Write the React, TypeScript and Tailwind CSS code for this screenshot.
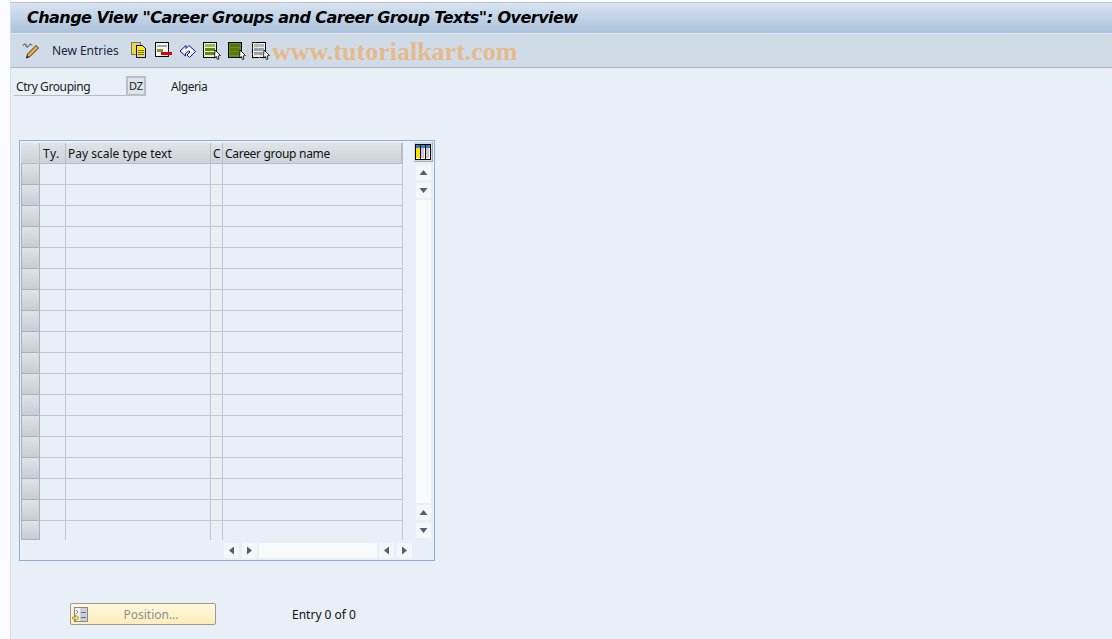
const font = { fontFamily: '"Noto Sans", sans-serif' };

const rowCount = 18;

function SheetIcon({ fill, band, top }: { fill: string; band: string; top: string }) {
  return (
    <svg width="18" height="18" viewBox="0 0 18 18" shapeRendering="crispEdges">
      <rect x="0.5" y="0.5" width="13" height="15" fill={fill} stroke="#000" strokeWidth="1.4" />
      <rect x="2" y="2" width="10" height="3" fill={top} />
      <rect x="2" y="6" width="10" height="3" fill={band} />
      <rect x="2" y="10" width="10" height="3" fill={band} />
      <path d="M12 8l5.5 5.5-2.5.5 1 3-1.5.5-1.2-3-1.8 1.5z" fill="#fff" stroke="#000" strokeWidth="0.8" shapeRendering="auto" />
    </svg>
  );
}

function ToolIcons() {
  return (
    <div className="flex items-center">
      {/* copy */}
      <svg className="ml-[12px]" width="17" height="17" viewBox="0 0 17 17" shapeRendering="crispEdges">
        <rect x="0.5" y="0.5" width="9" height="12" fill="#e8d84a" stroke="#77775a" />
        <path d="M5.5 3.5h6l3 3v9h-9z" fill="#ffe900" stroke="#0000c8" />
        <path d="M7 8h6M7 10h6M7 12h6" stroke="#6a6a20" />
      </svg>
      {/* delete */}
      <svg className="ml-[7px]" width="18" height="17" viewBox="0 0 18 17" shapeRendering="crispEdges">
        <rect x="0.5" y="0.5" width="13" height="14" fill="#f4f6f8" stroke="#000" />
        <rect x="2" y="3" width="10" height="2" fill="#9aa8b4" />
        <rect x="2" y="7" width="6" height="3" fill="#7f9a20" />
        <rect x="6" y="10" width="11" height="3" fill="#e00010" />
      </svg>
      {/* undo */}
      <svg className="ml-[6px]" width="18" height="17" viewBox="0 0 18 17">
        <path d="M1 9l6-5.500v3l3-3 6.500 6-6 6-2.500-2.500 3-3-1.200-1.200L6.500 11.500v2.500z" fill="#f2f6fb" stroke="#10108c" strokeWidth="1" />
      </svg>
      <div className="ml-[6px] flex">
        <SheetIcon fill="#eaf0da" band="#5f8a10" top="#9ab84a" />
      </div>
      <div className="ml-[7px] flex">
        <SheetIcon fill="#6f8f18" band="#55780f" top="#4e7410" />
      </div>
      <div className="ml-[6px] flex">
        <SheetIcon fill="#eef2f6" band="#8ea0b0" top="#a8b8c4" />
      </div>
    </div>
  );
}

function ArrowButton({ dir }: { dir: "up" | "down" | "left" | "right" }) {
  const points = {
    up: "3.5,10 7.5,5 11.5,10",
    down: "3.5,5 11.5,5 7.5,10",
    left: "10,3.5 10,11.5 5,7.5",
    right: "5,3.5 5,11.5 10,7.5",
  }[dir];
  return (
    <div className="w-[15px] h-[15px] bg-[#f4f7fa] flex items-center justify-center">
      <svg width="15" height="15" viewBox="0 0 15 15">
        <polygon points={points} fill="#4f6070" />
      </svg>
    </div>
  );
}

function TableGrid() {
  const rows = Array.from({ length: rowCount });
  const head = "bg-gradient-to-b from-[#e0e4e8] to-[#cdd2d8] border-b border-[#b4bdc8] overflow-hidden";
  return (
    <div className="w-[382px]">
      {/* header */}
      <div className="flex h-[21px] text-[12px] text-[#111] leading-[21px]">
        <div className={`w-[19px] shrink-0 border-r ${head}`} />
        <div className={`w-[26px] shrink-0 pl-[3px] tracking-[0.5px] border-r ${head}`}>Ty.</div>
        <div className={`w-[145px] shrink-0 pl-[2px] border-r ${head}`}>Pay scale type text</div>
        <div className={`w-[12px] shrink-0 pl-[2px] border-r ${head}`}>C</div>
        <div className={`flex-1 pl-[2px] tracking-[-0.3px] border-r-2 ${head}`}>Career group name</div>
      </div>
      {/* body */}
      {rows.map((_, i) => {
        const last = i === rowCount - 1;
        const cell = `border-r border-[#bcc8d6] ${last ? "" : "border-b"}`;
        return (
          <div key={i} className={`flex ${last ? "h-[19px]" : "h-[21px]"}`}>
            <div className="w-[19px] shrink-0 bg-gradient-to-b from-[#dfe3e7] to-[#c8cdd4] border border-t-0 border-[#a9b1ba]" />
            <div className={`w-[26px] shrink-0 ${cell}`} />
            <div className={`w-[145px] shrink-0 ${cell}`} />
            <div className={`w-[12px] shrink-0 ${cell}`} />
            <div className={`flex-1 ${cell}`} />
          </div>
        );
      })}
    </div>
  );
}

function ColumnConfigIcon() {
  return (
    <div className="w-[19px] h-[20px] bg-[#d5dae0] border-r border-b border-[#a8b0b8] flex items-center justify-center">
      <svg width="16" height="16" viewBox="0 0 16 16" shapeRendering="crispEdges">
        <rect x="0.5" y="0.5" width="15" height="15" fill="#fff" stroke="#000" />
        <rect x="1" y="1" width="14" height="3" fill="#2f7fc4" />
        <rect x="1" y="4" width="4" height="10" fill="#ffe000" />
        <rect x="6" y="4" width="3" height="10" fill="#c8c8c8" />
        <rect x="11" y="4" width="3" height="10" fill="#c8c8c8" />
        <path d="M5.5 1v14M10.5 1v14" stroke="#000" />
      </svg>
    </div>
  );
}

export default function App() {
  return (
    <div className="relative h-[639px] w-[1112px] overflow-hidden bg-[#fbfcfd] flex text-[12px]" style={font}>
      <div className="w-[10px] shrink-0" />
      <div className="flex-1 flex flex-col border-l border-[#d6dde8] bg-[#e8eff6]">
        <div className="h-[3px] shrink-0 bg-[#fbfcfd] border-b border-[#b9c2cc]" />
        <div className="h-[31px] shrink-0 pl-[16px] flex items-center bg-gradient-to-b from-[#d8e4f0] to-[#a9c1da] border-b border-[#e2e9f0]">
          <h1 className="text-[16px] tracking-[-0.54px] font-bold italic text-black whitespace-nowrap" style={{ fontFamily: '"DejaVu Sans", sans-serif' }}>
            Change View "Career Groups and Career Group Texts": Overview
          </h1>
        </div>
        <div className="h-[34px] shrink-0 pl-[11px] flex items-center bg-[#cfdce7] border-b border-[#aab4bf]">
          <svg width="19" height="18" viewBox="0 0 19 18">
            <path d="M4.500 16l1-4 8.500-8.500 2.500 2.500-8.500 8.500z" fill="#f4a93a" stroke="#222" strokeWidth="0.9" />
            <path d="M4.500 16l.6-2.500 1.900 1.900z" fill="#222" />
            <path d="M1 3.500c1-2 3-2 3 0s2 2 3 0 2-1.500 3 0" fill="none" stroke="#222" strokeWidth="1" />
          </svg>
          <span className="ml-[11px] tracking-[-0.05px] text-[#1a2440] whitespace-nowrap">New Entries</span>
          <ToolIcons />
        </div>

        <div className="mt-[8px] ml-[3px] flex h-[20px] items-stretch">
          <div className="w-[112px] border-b border-[#b4bcc6] pl-[2px] tracking-[-0.4px] leading-[21px] text-[#1c1c1c]">Ctry Grouping</div>
          <div className="w-[20px] bg-[#dee3e9] border-2 border-[#b8bfc7] text-[11px] leading-[16px] text-center text-[#222]">DZ</div>
          <div className="ml-[25px] tracking-[-0.5px] leading-[21px] text-[#1c1c1c]">Algeria</div>
        </div>

        <div className="mt-[44px] ml-[8px] w-[416px] h-[421px] border border-[#8fb0cf] pt-[2px] pl-[1px] flex">
          <div className="flex flex-col w-[382px]">
            <TableGrid />
            <div className="mt-[3px] ml-[203px] flex">
              <ArrowButton dir="left" />
              <div className="ml-[3px]"><ArrowButton dir="right" /></div>
              <div className="ml-[2px] w-[118px] h-[15px] shrink-0 bg-[#f8fafb]" />
              <div className="ml-[2px]"><ArrowButton dir="left" /></div>
              <div className="ml-[3px]"><ArrowButton dir="right" /></div>
            </div>
          </div>
          <div className="ml-[11px] -mt-[1px] flex flex-col items-center">
            <ColumnConfigIcon />
            <div className="mt-[3px]"><ArrowButton dir="up" /></div>
            <div className="mt-[3px]"><ArrowButton dir="down" /></div>
            <div className="mt-[2px] w-[15px] h-[303px] bg-[#f8fafb]" />
            <div className="mt-[2px]"><ArrowButton dir="up" /></div>
            <div className="mt-[3px]"><ArrowButton dir="down" /></div>
          </div>
        </div>

        <div className="mt-[42px] ml-[59px] flex items-center">
          <div className="w-[146px] h-[22px] rounded-[2px] border border-[#9a9a90] bg-gradient-to-b from-[#fff8dc] to-[#feeebc] flex items-center">
            <svg className="ml-[1px]" width="16" height="17" viewBox="0 0 16 17" shapeRendering="crispEdges">
              <rect x="2.500" y="1.500" width="13" height="14" fill="#c9d0da" stroke="#868c94" />
              <rect x="3" y="2" width="5" height="13" fill="#eef0f3" />
              <path d="M9 6h5M9 11h5" stroke="#666c74" />
              <path d="M4 4l2 2-2 2" fill="none" stroke="#8a9098" />
              <path d="M0.500 11h3V9l3.500 3-3.500 3v-2h-3z" fill="#ffe23a" stroke="#a08a10" strokeWidth="0.7" shapeRendering="auto" />
            </svg>
            <span className="flex-1 text-center text-[#8a8f98] pr-[1px] translate-y-[1px]">Position...</span>
          </div>
          <span className="ml-[76px] translate-y-[1px] text-[#111]">Entry 0 of 0</span>
        </div>
      </div>

      {/* watermark over the toolbar */}
      <svg className="absolute left-[246px] top-[42px]" width="18" height="18" viewBox="0 0 18 18" fill="none" stroke="#e6b98c" opacity="0.6">
        <circle cx="9" cy="9" r="8" />
        <circle cx="9" cy="9" r="4" />
      </svg>
      <div className="absolute left-[272px] top-[37px] text-[26px] font-bold text-[#e6b98c] whitespace-nowrap leading-[30px]" style={{ fontFamily: '"Liberation Serif", serif' }}>
        www.tutorialkart.com
      </div>
    </div>
  );
}
